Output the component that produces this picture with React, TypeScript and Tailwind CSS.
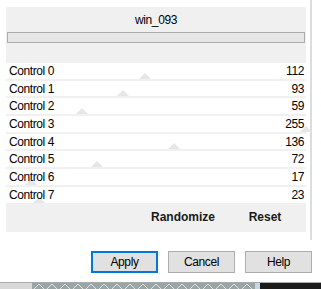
import React from "react";

type Control = { name: string; value: number };

const controls: Control[] = [
  { name: "Control 0", value: 112 },
  { name: "Control 1", value: 93 },
  { name: "Control 2", value: 59 },
  { name: "Control 3", value: 255 },
  { name: "Control 4", value: 136 },
  { name: "Control 5", value: 72 },
  { name: "Control 6", value: 17 },
  { name: "Control 7", value: 23 },
];

// faint slider thumb, placed along the row by value
function Thumb({ value }: { value: number }) {
  const left = Math.min(value * 1.2 - 1, 294);
  return (
    <svg
      className="absolute bottom-0"
      style={{ left }}
      width="12"
      height="6"
      viewBox="0 0 12 6"
    >
      <polygon points="0,6 6,0 12,6" fill="#e6e6e6" />
    </svg>
  );
}

function Row({ c }: { c: Control }) {
  return (
    <div className="flex flex-col">
      <div className="relative h-[15.7px] bg-white flex items-center justify-between pl-[3px] pr-[2px]">
        <Thumb value={c.value} />
        <span className="relative">{c.name}</span>
        <span className="relative">{c.value}</span>
      </div>
      <div className="h-[2px] bg-[#f0f0f0]" />
    </div>
  );
}

export default function App() {
  return (
    <div
      className="w-[321px] h-[289px] bg-white flex flex-col text-[12px] tracking-[-0.4px] text-black leading-none overflow-hidden"
      style={{ fontFamily: '"Liberation Sans", Arial, sans-serif' }}
    >
      <div className="h-[283px] flex flex-col border-b border-[#a9a9a9]">
        <div className="w-[312px] h-[240px] border-r-2 border-[#dcdcdc] pt-[7px] pl-[6px]">
          <div className="w-[300px] flex flex-col">
            {/* header */}
            <div className="bg-[#f0f0f0] h-[56px] flex flex-col px-[1px]">
              <div className="h-[25px] flex items-center justify-center">win_093</div>
              <div className="h-[11px] border border-[#adadad] bg-[#e6e6e6]" />
            </div>
            {/* rows */}
            <div className="flex flex-col">
              {controls.map((c) => (
                <Row key={c.name} c={c} />
              ))}
            </div>
            {/* action bar */}
            <div className="bg-[#f0f0f0] h-[29px] -mt-[2px] flex justify-end items-center font-bold tracking-normal text-[#1a1a1a]">
              <div className="w-[82px] text-center">Randomize</div>
              <div className="w-[82px] text-center">Reset</div>
            </div>
          </div>
        </div>
        <div className="flex justify-end gap-[10px] pr-[9px] pt-[11px]">
          <button className="w-[67px] h-[22px] bg-[#e1e1e1] border-2 border-[#0078d7]">
            Apply
          </button>
          <button className="w-[67px] h-[22px] bg-[#e1e1e1] border border-[#adadad]">
            Cancel
          </button>
          <button className="w-[67px] h-[22px] bg-[#e1e1e1] border border-[#adadad]">
            Help
          </button>
        </div>
      </div>
      {/* desktop strip below the dialog */}
      <div className="flex h-[6px]">
        <div className="w-[32px] bg-[#d8d8d8]" />
        <svg width="223" height="6" className="block bg-[#9aa6a6]">
          {Array.from({ length: 18 }).map((_, i) => (
            <polyline
              key={i}
              points={`${i * 13 + 2},6 ${i * 13 + 7},1 ${i * 13 + 12},6`}
              fill="none"
              stroke="#dde3e3"
              strokeWidth="1"
            />
          ))}
        </svg>
        <div className="w-[5px] bg-[#c8d8e0]" />
        <div className="flex-1 bg-[#1b1b1b]" />
      </div>
    </div>
  );
}
